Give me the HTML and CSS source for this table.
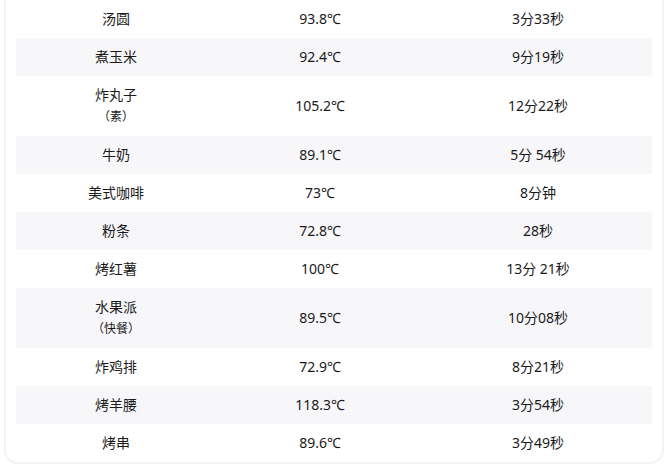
FILE: index.html
```html
<!DOCTYPE html>
<html lang="zh-CN">
<head>
<meta charset="utf-8">
<title>食物温度表</title>
<link rel="stylesheet" href="styles.css">
</head>
<body>
<div class="card">
  <table class="food-table">
    <colgroup>
      <col class="c1"><col class="c2"><col class="c3">
    </colgroup>
    <tbody>
      <tr><td>汤圆</td><td>93.8℃</td><td>3分33秒</td></tr>
      <tr class="alt"><td>煮玉米</td><td>92.4℃</td><td>9分19秒</td></tr>
      <tr><td>炸丸子<span class="note">（素）</span></td><td>105.2℃</td><td>12分22秒</td></tr>
      <tr class="alt"><td>牛奶</td><td>89.1℃</td><td>5分 54秒</td></tr>
      <tr><td>美式咖啡</td><td>73℃</td><td>8分钟</td></tr>
      <tr class="alt"><td>粉条</td><td>72.8℃</td><td>28秒</td></tr>
      <tr><td>烤红薯</td><td>100℃</td><td>13分 21秒</td></tr>
      <tr class="alt"><td>水果派<span class="note">（快餐）</span></td><td>89.5℃</td><td>10分08秒</td></tr>
      <tr><td>炸鸡排</td><td>72.9℃</td><td>8分21秒</td></tr>
      <tr class="alt"><td>烤羊腰</td><td>118.3℃</td><td>3分54秒</td></tr>
      <tr><td>烤串</td><td>89.6℃</td><td>3分49秒</td></tr>
    </tbody>
  </table>
</div>
</body>
</html>
```

FILE: styles.css
```css
html, body {
  margin: 0;
  padding: 0;
  background: #ffffff;
}
body {
  font-family: "Noto Sans", "Noto Sans CJK SC", sans-serif;
  font-size: 14px;
  color: #1a1a1a;
}
.card {
  box-sizing: border-box;
  width: 660px;
  margin-left: 4px;
  padding: 0 10px;
  border: 2px solid #f3f3f4;
  border-top: none;
  border-radius: 0 0 14px 14px;
  background: #ffffff;
}
.food-table {
  width: 636px;
  border-collapse: collapse;
  table-layout: fixed;
}
.c1 { width: 200px; }
.c2 { width: 208px; }
.c3 { width: 228px; }
.food-table td {
  height: 22px;
  padding: 8px 0;
  line-height: 22px;
  text-align: center;
  vertical-align: middle;
}
.food-table tr.alt td {
  background: #f7f6f9;
}
.note {
  display: block;
  font-size: 12px;
  line-height: 22px;
}
```
